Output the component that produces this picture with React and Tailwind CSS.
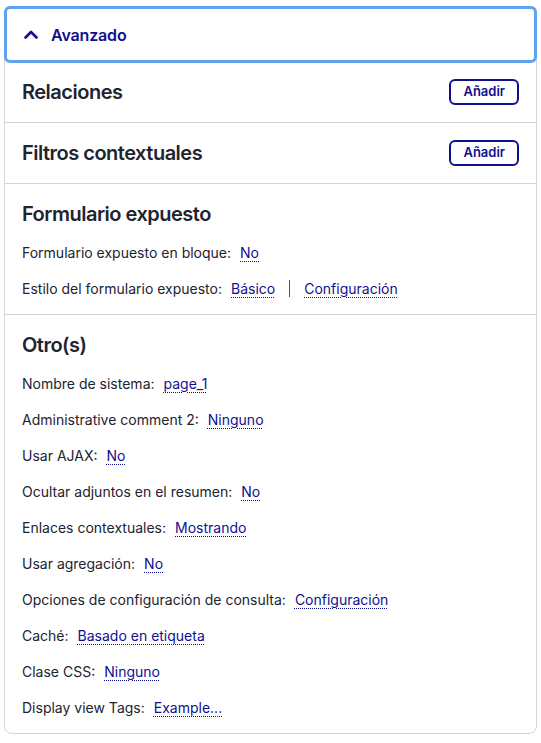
const navy = 'text-[#10108f]';

function Link({ children }) {
  return (
    <a
      href="#"
      className={`${navy} underline decoration-dotted decoration-1 underline-offset-[3px]`}
    >
      {children}
    </a>
  );
}

function Row({ label, children }) {
  return (
    <div className="flex h-9 items-center text-[14px] text-[#222330]">
      <span>{label}:</span>
      <span className="ml-[9px] flex items-center">{children}</span>
    </div>
  );
}

function Heading({ children }) {
  return <h3 className="text-[20px] font-semibold leading-6 tracking-[-0.025em] text-[#222330]">{children}</h3>;
}

function AddSection({ title }) {
  return (
    <div className="flex h-[61px] items-center justify-between border-b border-[#d4d4d8] px-[17px]">
      <Heading>{title}</Heading>
      <button className="h-[26px] rounded-md border-2 border-[#10108f] bg-white px-[12px] text-[13px] font-semibold text-[#10108f]">
        Añadir
      </button>
    </div>
  );
}

export default function App() {
  const otros = [
    ['Nombre de sistema', 'page_1'],
    ['Administrative comment 2', 'Ninguno'],
    ['Usar AJAX', 'No'],
    ['Ocultar adjuntos en el resumen', 'No'],
    ['Enlaces contextuales', 'Mostrando'],
    ['Usar agregación', 'No'],
    ['Opciones de configuración de consulta', 'Configuración'],
    ['Caché', 'Basado en etiqueta'],
    ['Clase CSS', 'Ninguno'],
    ['Display view Tags', 'Example...'],
  ];

  return (
    <div className="min-h-screen bg-white px-1 pt-[6px]" style={{ fontFamily: 'Inter, "Noto Sans", sans-serif' }}>
      <div className="rounded-lg border border-[#d4d4d8]">
        {/* details summary, focused */}
        <div className="-m-px flex h-[57px] items-center rounded-md border-[3px] border-[#5fa3ee] bg-white pl-[17px]">
          <svg width="14" height="9" viewBox="0 0 14 9" fill="none" className="mr-[13px]">
            <polyline points="1.5,7.5 7,2 12.5,7.5" stroke="#10108f" strokeWidth="2.6" strokeLinecap="round" strokeLinejoin="round" />
          </svg>
          <span className={`text-[16px] font-semibold tracking-[-0.01em] ${navy}`}>Avanzado</span>
        </div>

        <AddSection title="Relaciones" />
        <AddSection title="Filtros contextuales" />

        <div className="border-b border-[#d4d4d8] px-[17px] pt-[18px] pb-[8px]">
          <Heading>Formulario expuesto</Heading>
          <div className="mt-[8px]">
            <Row label="Formulario expuesto en bloque">
              <Link>No</Link>
            </Row>
            <Row label="Estilo del formulario expuesto">
              <Link>Básico</Link>
              <span className="mx-[14px] h-[17px] w-px bg-[#9a3048]" />
              <Link>Configuración</Link>
            </Row>
          </div>
        </div>

        <div className="px-[17px] pt-[18px] pb-[8px]">
          <Heading>Otro(s)</Heading>
          <div className="mt-[8px]">
            {otros.map(([label, value]) => (
              <Row key={label} label={label}>
                <Link>{value}</Link>
              </Row>
            ))}
          </div>
        </div>
      </div>
    </div>
  );
}
